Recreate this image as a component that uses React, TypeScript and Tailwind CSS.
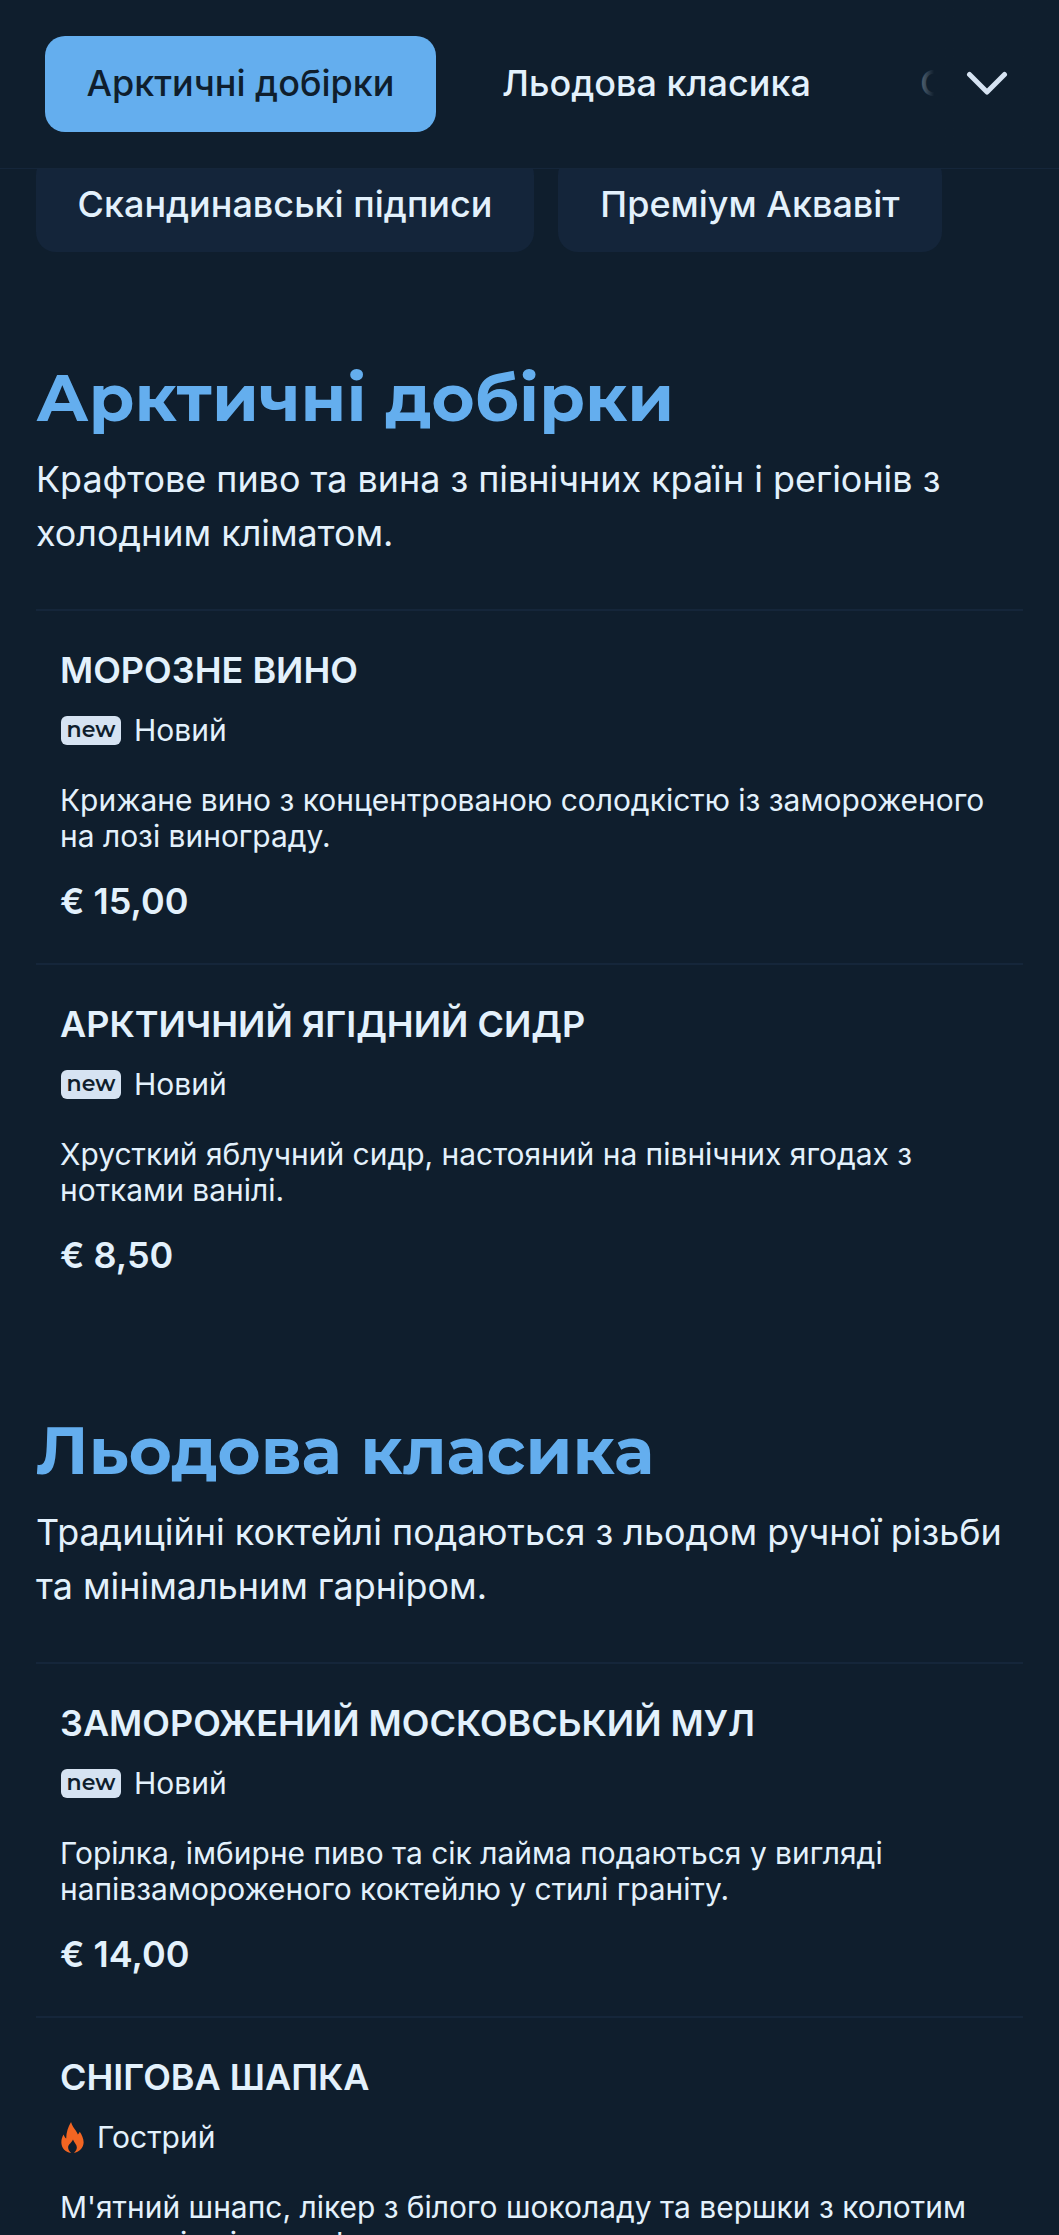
const sections = [
  {
    title: "Арктичні добірки",
    description: "Крафтове пиво та вина з північних країн і регіонів з холодним кліматом.",
    items: [
      {
        name: "МОРОЗНЕ ВИНО",
        tag: "new",
        text: "Крижане вино з концентрованою солодкістю із замороженого на лозі винограду.",
        price: "€ 15,00",
      },
      {
        name: "АРКТИЧНИЙ ЯГІДНИЙ СИДР",
        tag: "new",
        text: "Хрусткий яблучний сидр, настояний на північних ягодах з нотками ванілі.",
        price: "€ 8,50",
      },
    ],
  },
  {
    title: "Льодова класика",
    description: "Традиційні коктейлі подаються з льодом ручної різьби та мінімальним гарніром.",
    items: [
      {
        name: "ЗАМОРОЖЕНИЙ МОСКОВСЬКИЙ МУЛ",
        tag: "new",
        text: "Горілка, імбирне пиво та сік лайма подаються у вигляді напівзамороженого коктейлю у стилі граніту.",
        price: "€ 14,00",
      },
      {
        name: "СНІГОВА ШАПКА",
        tag: "hot",
        text: "М'ятний шнапс, лікер з білого шоколаду та вершки з колотим льодом і свіжою м'ятою.",
        price: "€ 13,00",
      },
    ],
  },
];

function Tag({ tag }: { tag: string }) {
  if (tag === "hot") {
    return (
      <div className="mt-[16px] flex h-[40px] items-center gap-[13px] text-[30px] text-[#e3f1fc]">
        <svg className="h-[31px] w-[24px]" viewBox="0 0 24 32" fill="#f26522">
          <path d="M11 0C12 4 14 6 16 9C17 11 18 12 18 13C19 12 19.5 11 20 10C22 13 24 17 24 21C24 27 19 31 14 32C16 30 17 28 17 26C17 23 14 21 13 18C12 21 8 23 8 26C8 28 9 30 11 32C5 31 1 27 1 21C1 18 2 15 3.5 13C4 15 4.5 16 6 17C6 11 8 5 11 0Z" />
        </svg>
        <span>Гострий</span>
      </div>
    );
  }
  return (
    <div className="mt-[16px] flex h-[40px] items-center gap-[13px] text-[30px] text-[#e3f1fc]">
      <span className="ml-px flex h-[29px] w-[60px] items-center justify-center rounded-[6px] bg-[#d6e3f2] font-['Montserrat','Inter',sans-serif] text-[22px] leading-none font-semibold text-[#0f1e2d]">
        new
      </span>
      <span>Новий</span>
    </div>
  );
}

export default function App() {
  return (
    <div className="h-[2235px] overflow-hidden bg-[#0f1e2d] font-['Inter',sans-serif] text-[#e3f1fc]">
      <header className="relative z-10 h-[169px] overflow-hidden border-b border-[#15263a] bg-[#0f1e2d]">
        <div className="flex items-center gap-[22px] pt-[36px] pl-[45px]">
          <button className="h-[96px] w-[391px] shrink-0 rounded-[20px] bg-[#64aeee] pb-[2px] text-[36px] font-medium text-[#0f1e2d]">
            Арктичні добірки
          </button>
          <button className="h-[96px] shrink-0 px-[44px] pb-[2px] text-[36px] font-medium text-[#e3f1fc]">
            Льодова класика
          </button>
          <button className="h-[96px] shrink-0 px-[43px] pb-[2px] text-[36px] font-medium text-[#e3f1fc]">
            Скандинавські підписи
          </button>
        </div>
        <div className="absolute top-0 right-0 flex h-[168px] w-[165px] items-center justify-end bg-gradient-to-r from-transparent from-[0px] to-[#0f1e2d] to-[40px] pr-[51px]">
          <svg width="42" height="26" viewBox="0 0 42 26" fill="none">
            <path d="M3.5 3.5 L21 21 L38.5 3.5" stroke="#d6e3f2" strokeWidth="5" strokeLinecap="round" strokeLinejoin="round" />
          </svg>
        </div>
      </header>

      <div className="-mt-[14px] flex gap-[24px] px-[36px]">
        <button className="h-[97px] w-[498px] rounded-[20px] bg-[#14253a] text-[36px] font-medium">
          Скандинавські підписи
        </button>
        <button className="h-[97px] w-[384px] rounded-[20px] bg-[#14253a] text-[36px] font-medium">
          Преміум Аквавіт
        </button>
      </div>

      <main className="px-[36px]">
        {sections.map((section) => (
          <section key={section.title} className="mb-[94px] first:mt-[106px]">
            <h2 className="font-['Montserrat','Inter',sans-serif] text-[66px] leading-[80px] font-bold text-[#64aeee]">
              {section.title}
            </h2>
            <p className="mt-[14px] text-[35.9px] leading-[54px]">{section.description}</p>
            <div className="mt-[49px]">
              {section.items.map((item) => (
                <article key={item.name} className="border-t-2 border-[#15263a] px-[24px] pt-[35px] pb-[38px]">
                  <h3 className="text-[36px] leading-[48px] font-semibold">{item.name}</h3>
                  <Tag tag={item.tag} />
                  <p className="mt-[32px] text-[29.95px] leading-[36px]">{item.text}</p>
                  <p className="mt-[23px] text-[36px] leading-[48px] font-semibold">{item.price}</p>
                </article>
              ))}
            </div>
          </section>
        ))}
      </main>
    </div>
  );
}
